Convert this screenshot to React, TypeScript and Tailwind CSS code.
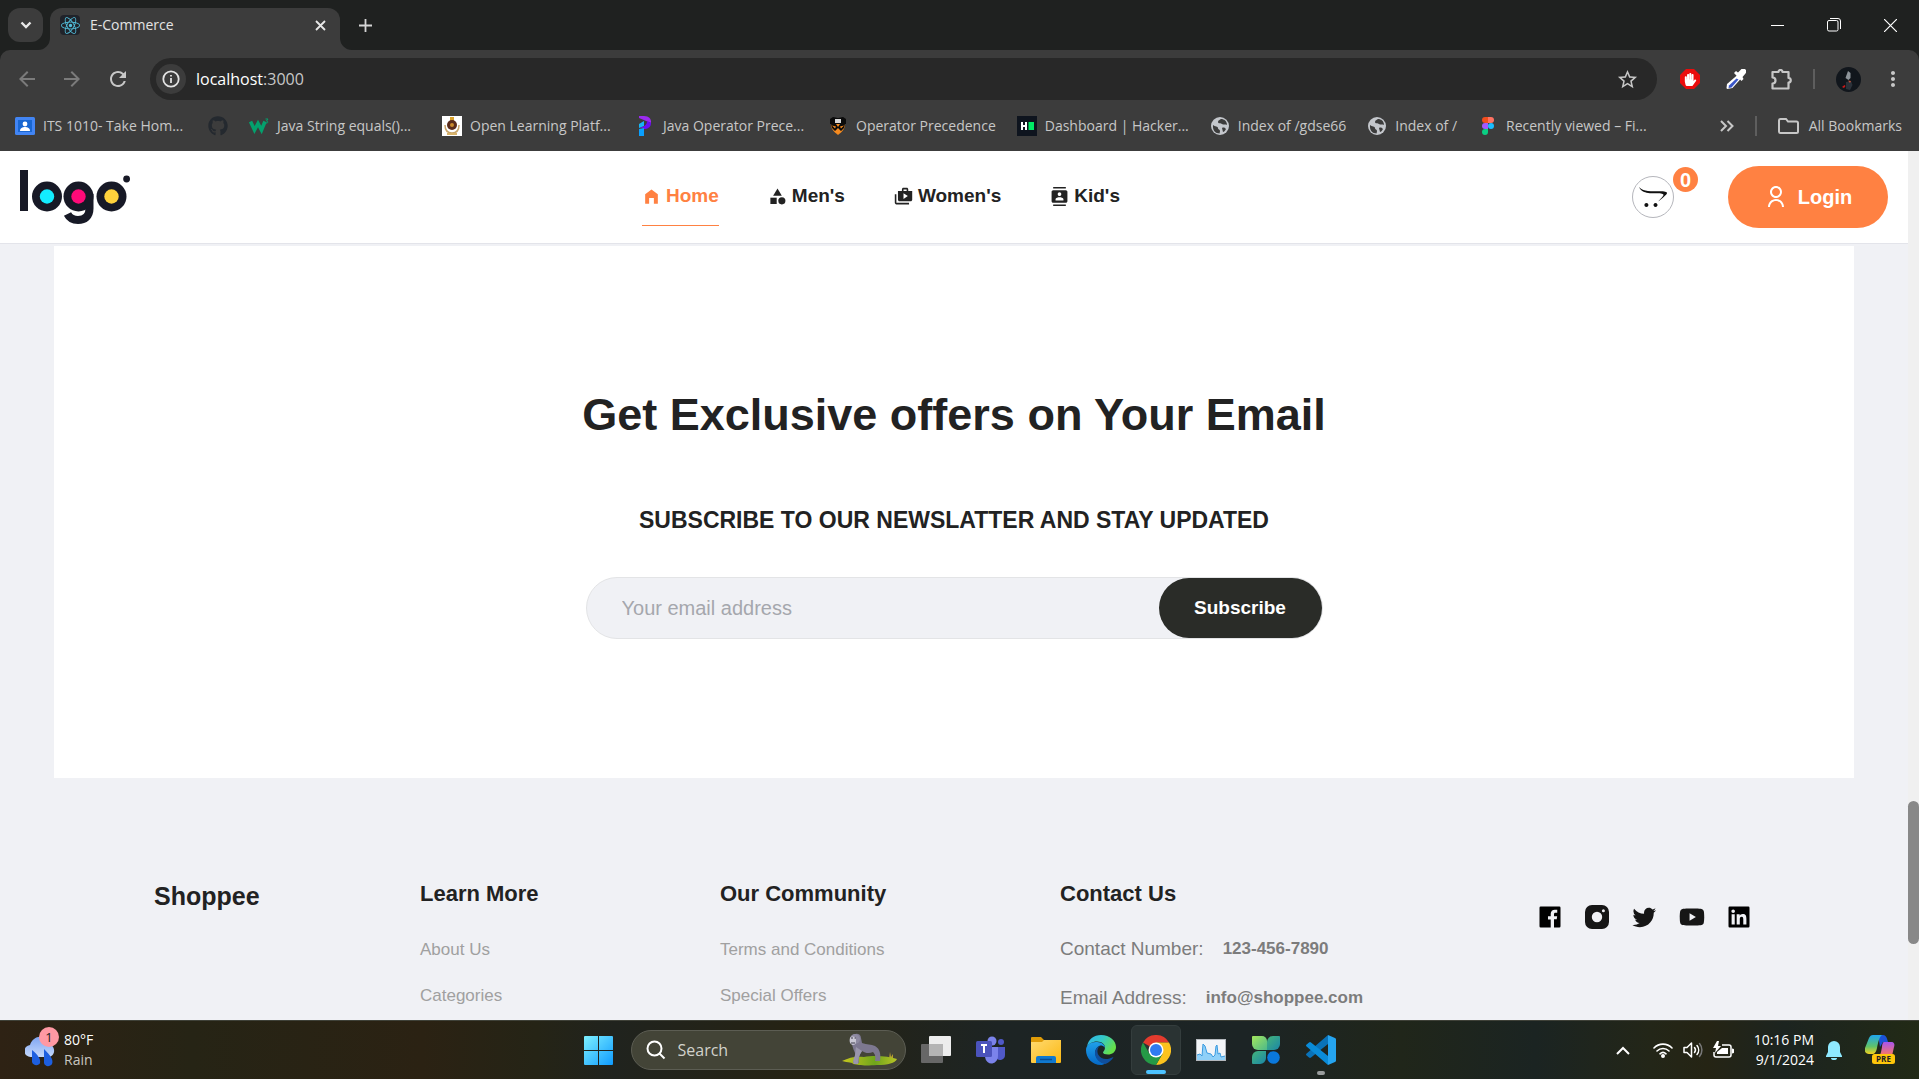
import React from "react";
import { FaGithub, FaReact, FaOpencart, FaHandPaper } from "react-icons/fa";
import {
  MdHomeFilled,
  MdCategory,
  MdShop2,
  MdContacts,
  MdStarBorder,
  MdRefresh,
  MdArrowBack,
  MdArrowForward,
  MdMoreVert,
} from "react-icons/md";
import { AiFillYoutube } from "react-icons/ai";
import { RiUserLine } from "react-icons/ri";
import { BiLogoFacebookSquare, BiLogoLinkedinSquare, BiLogoTwitter } from "react-icons/bi";

/* ---------- Favicons ---------- */

function ClassroomIcon() {
  return (
    <svg width="20" height="20" viewBox="0 0 20 20">
      <rect y="1" width="20" height="18" rx="1.5" fill="#4285f4" />
      <rect x="3" y="4" width="14" height="12" fill="#1967d2" />
      <circle cx="10" cy="8" r="2.4" fill="#fff" />
      <path d="M5 15c0-3 2.5-4 5-4s5 1 5 4z" fill="#fff" />
    </svg>
  );
}

function W3Icon() {
  return (
    <svg width="20" height="20" viewBox="0 0 20 20" fill="none" stroke="#04a06d">
      <path d="M1.500 5.500l4 8.500 3.500-6.500 3.500 6.500 3.500-8.500" strokeWidth="3.600" />
      <path d="M16.500 3h2.500l-1.500 2c2 0 2 2.500-1 2" strokeWidth="1" />
    </svg>
  );
}

function CrestIcon() {
  return (
    <svg width="20" height="20" viewBox="0 0 20 20">
      <rect width="20" height="20" fill="#fff" />
      <rect x="8" y="1" width="4" height="4" fill="#d9a22b" />
      <path d="M3 9c0 6 3 8 7 8s7-2 7-8" fill="none" stroke="#c9a56a" strokeWidth="1.500" />
      <circle cx="10" cy="9" r="5" fill="#5a2b1a" />
      <circle cx="10" cy="9" r="2" fill="#c98a2b" />
      <path d="M5 17h10v2H5z" fill="#d8b36a" />
    </svg>
  );
}

function ProgramizIcon() {
  return (
    <svg width="20" height="20" viewBox="0 0 20 20">
      <path d="M4 0h5c5 0 7.500 3 7 7L4 2z" fill="#9b2bf0" />
      <path d="M12 5l4 2c0 4-3 6-7 6l-4-2c4 0 7-2 7-6z" fill="#6a0df5" />
      <path d="M4 8l5-3v5l-5 2z" fill="#19b3f5" />
      <path d="M4 13l5-1v8H4z" fill="#0aa0ff" />
    </svg>
  );
}

function PrincetonIcon() {
  return (
    <svg width="20" height="20" viewBox="0 0 20 20">
      <path d="M2 3l3-2 5 1 5-1 3 2v5H2z" fill="#0b0b0b" />
      <path d="M7 3h6v4H7z" fill="#d8d8d8" />
      <path d="M3 8h14c0 5-3 8-7 11C6 16 3 13 3 8z" fill="#f58a1f" />
      <path d="M3 8h5l2 3 2-3h5l-1 4-3 3-3-3-3 3-3-3z" fill="#0b0b0b" />
      <path d="M4 9.500l3 3 1-2zM16 9.500l-3 3-1-2z" fill="#f58a1f" />
    </svg>
  );
}

function HackerRankIcon() {
  return (
    <svg width="20" height="20" viewBox="0 0 20 20">
      <rect width="20" height="20" fill="#0e141e" />
      <path d="M4 6h2v3h2V6h2v8H8v-3H6v3H4z" fill="#fff" />
      <rect x="11.500" y="6" width="5.500" height="8" fill="#00ea64" />
    </svg>
  );
}

function GlobeIcon() {
  return (
    <svg width="20" height="20" viewBox="0 0 20 20">
      <circle cx="10" cy="10" r="9" fill="#c4c7cc" />
      <path d="M3 9c2 2 5 1 5 3s2 1 2 3-1 2 0 2.500C5 17.500 2.500 14 3 9zM11 3c-1 1-3 1-3 3s3 1 4 2 4 0 5 1c0-4-3-6-6-6zM12 12c2-1 3 0 4 1-1 2-2 3-3 3z" fill="#3c3c3c" />
    </svg>
  );
}

function FigmaIcon() {
  return (
    <svg width="20" height="20" viewBox="0 0 20 20">
      <path d="M10 1H7a3 3 0 0 0 0 6h3z" fill="#f24e1e" />
      <path d="M10 1h3a3 3 0 0 1 0 6h-3z" fill="#ff7262" />
      <path d="M10 7H7a3 3 0 0 0 0 6h3z" fill="#a259ff" />
      <circle cx="13" cy="10" r="3" fill="#1abcfe" />
      <path d="M10 13H7a3 3 0 1 0 3 3z" fill="#0acf83" />
    </svg>
  );
}

/* ---------- Browser chrome ---------- */

type Bookmark = { label: string; icon: React.ReactNode; clipped?: boolean };

const bookmarks: Bookmark[] = [
  { label: "ITS 1010- Take Hom...", icon: <ClassroomIcon />, clipped: true },
  { label: "", icon: <FaGithub className="size-5 text-[#24292f]" /> },
  { label: "Java String equals()...", icon: <W3Icon />, clipped: true },
  { label: "Open Learning Platf...", icon: <CrestIcon />, clipped: true },
  { label: "Java Operator Prece...", icon: <ProgramizIcon />, clipped: true },
  { label: "Operator Precedence", icon: <PrincetonIcon /> },
  { label: "Dashboard | Hacker...", icon: <HackerRankIcon />, clipped: true },
  { label: "Index of /gdse66", icon: <GlobeIcon /> },
  { label: "Index of /", icon: <GlobeIcon /> },
  { label: "Recently viewed – Fi...", icon: <FigmaIcon />, clipped: true },
];

function TabStrip() {
  return (
    <div className="flex h-[50px] items-end pl-2">
      <button aria-label="Search tabs" className="mb-2 flex h-[34px] w-[35px] items-center justify-center rounded-xl bg-[#3c3c3c]">
        <svg width="12" height="8" viewBox="0 0 12 8" fill="none" stroke="#e8e8e8" strokeWidth="2.400">
          <path d="M1.500 1.500L6 6l4.500-4.500" />
        </svg>
      </button>
      <div className="relative ml-[7px] flex h-[42px] w-[290px] items-center rounded-t-xl bg-[#3c3c3c] pr-3 pb-2 pl-[10px]">
        <svg className="absolute bottom-0 -left-3" width="12" height="12" viewBox="0 0 12 12">
          <path d="M12 0v12H0A12 12 0 0 0 12 0z" fill="#3c3c3c" />
        </svg>
        <svg className="absolute -right-3 bottom-0" width="12" height="12" viewBox="0 0 12 12">
          <path d="M0 0v12h12A12 12 0 0 1 0 0z" fill="#3c3c3c" />
        </svg>
        <span className="flex size-5 items-center justify-center rounded-sm bg-[#20232a]">
          <FaReact className="size-[19px] text-[#53c1de]" />
        </span>
        <span className="ml-[10px] flex-1 text-[#e3e3e3]">E-Commerce</span>
        <button aria-label="Close tab" className="flex size-4 items-center justify-center">
          <svg width="11" height="11" viewBox="0 0 11 11" stroke="#e8e8e8" strokeWidth="1.800">
            <path d="M1 1l9 9M10 1l-9 9" />
          </svg>
        </button>
      </div>
      <button aria-label="New tab" className="mb-[18px] ml-[19px]">
        <svg width="13" height="13" viewBox="0 0 13 13" stroke="#d5d5d5" strokeWidth="1.800">
          <path d="M6.500 0v13M0 6.500h13" />
        </svg>
      </button>
      <div className="ml-auto flex h-full items-center">
        <button aria-label="Minimize" className="flex w-[56px] justify-center">
          <svg width="13" height="13" viewBox="0 0 13 13" stroke="#fff">
            <path d="M0 6.500h13" />
          </svg>
        </button>
        <button aria-label="Restore" className="flex w-[57px] justify-center">
          <svg width="14" height="14" viewBox="0 0 14 14" fill="none" stroke="#fff">
            <rect x="0.500" y="2.500" width="10.500" height="10.500" rx="1.500" />
            <path d="M3 0.500h8a2.500 2.500 0 0 1 2.500 2.500v8" />
          </svg>
        </button>
        <button aria-label="Close" className="flex w-[57px] justify-center">
          <svg width="13" height="13" viewBox="0 0 13 13" stroke="#fff" strokeWidth="1.200">
            <path d="M0 0l13 13M13 0L0 13" />
          </svg>
        </button>
      </div>
    </div>
  );
}

function Toolbar() {
  return (
    <div className="flex h-[58px] items-center pr-[14px] pl-[15px] text-[#c7c7c7]">
      <button aria-label="Back" className="mr-[21px] text-[#7b7b7b]"><MdArrowBack className="size-6" /></button>
      <button aria-label="Forward" className="mr-[22px] text-[#7b7b7b]"><MdArrowForward className="size-6" /></button>
      <button aria-label="Reload" className="mr-[20px]"><MdRefresh className="size-6" /></button>
      <div className="flex h-[42px] flex-1 items-center rounded-full bg-[#282828] pr-[18px] pl-[6px]">
        <button aria-label="View site information" className="flex size-[30px] items-center justify-center rounded-full bg-[#3c3c3c]">
          <svg width="18" height="18" viewBox="0 0 18 18" fill="none" stroke="#e3e3e3" strokeWidth="1.800">
            <circle cx="9" cy="9" r="7.700" />
            <path d="M9 8v5M9 5v1.500" />
          </svg>
        </button>
        <div role="textbox" aria-label="Address" className="ml-[10px] flex-1 text-base text-white">
          localhost<span className="text-[#c7c7c7]">:3000</span>
        </div>
        <button aria-label="Bookmark this tab"><MdStarBorder className="size-[23px]" /></button>
      </div>
      <button aria-label="Ad blocker" className="ml-[23px]">
        <span className="relative flex size-5 items-center justify-center">
          <svg className="absolute inset-0" width="20" height="20" viewBox="0 0 20 20">
            <path d="M6 0h8l6 6v8l-6 6H6l-6-6V6z" fill="#ea0c0c" />
          </svg>
          <FaHandPaper className="relative size-[13px] -scale-x-100 text-white" />
        </span>
      </button>
      <button aria-label="Color picker" className="ml-[25px]">
        <svg width="21" height="21" viewBox="0 0 21 21">
          <path d="M13 5.500l3.500 3.500-9 10L2 20l-.5-1 .5-4z" fill="#fff" />
          <path d="M11.500 9.500l2 1-7 8-3 .5.5-2.500z" fill="#3a56c8" />
          <path d="M9 4l2-2 2 1.500L16 .500a3 3 0 0 1 4.500 4L17.500 8l1 2-2 2z" fill="#fff" />
        </svg>
      </button>
      <button aria-label="Extensions" className="ml-[25px]">
        <svg width="21" height="21" viewBox="0 0 21 21" fill="none" stroke="#c7c7c7" strokeWidth="2.200" strokeLinejoin="round">
          <path d="M1.500 3H7.500a2 2 0 0 1 4 0h6v6a2 2 0 0 1 0 4.500v6h-16v-5a3 3 0 0 0 0-6z" />
        </svg>
      </button>
      <span className="mx-[21px] h-5 w-[2px] bg-[#5e5e5e]" />
      <button aria-label="Profile" className="mr-[20px]">
        <svg width="25" height="25" viewBox="0 0 25 25">
          <circle cx="12.500" cy="12.500" r="12.500" fill="#11161c" />
          <path d="M12 4l2.500 2v5l-2 2-3-2z" fill="#8d949a" />
          <path d="M10 15l5-1 1.500 4-2.500 5-4-1z" fill="#2b323a" />
          <path d="M6 20l2.500-2 1 1-1.500 2z" fill="#d01818" />
          <path d="M12 13.500l3 .5-1 2z" fill="#c4553a" />
        </svg>
      </button>
      <button aria-label="Menu"><MdMoreVert className="size-6" /></button>
    </div>
  );
}

function BookmarksBar() {
  return (
    <div className="flex h-[43px] items-center gap-[21px] pr-[17px] pb-[7px] pl-[15px] text-[#c7c7c7]">
      {bookmarks.map((b, i) => (
        <a
          key={i}
          href="#bookmark"
          aria-label={b.label || "GitHub"}
          className={b.clipped ? "flex w-[172px] shrink-0 items-center gap-2 whitespace-nowrap" : "flex shrink-0 items-center gap-2 whitespace-nowrap"}
        >
          {b.icon}
          {b.label && <span>{b.label}</span>}
        </a>
      ))}
      <button aria-label="More bookmarks" className="ml-auto">
        <svg width="14" height="12" viewBox="0 0 14 12" fill="none" stroke="#c7c7c7" strokeWidth="2">
          <path d="M1 1l5 5-5 5M7.500 1l5 5-5 5" />
        </svg>
      </button>
      <span className="h-5 w-[2px] bg-[#5e5e5e]" />
      <button className="flex items-center gap-[10px]">
        <svg width="21" height="16" viewBox="0 0 21 16" fill="none" stroke="#c7c7c7" strokeWidth="2">
          <path d="M1 2.500A1.500 1.500 0 0 1 2.500 1H8l2 2.500h8.500A1.500 1.500 0 0 1 20 5v8.500a1.500 1.500 0 0 1-1.500 1.500h-16A1.500 1.500 0 0 1 1 13.500z" />
        </svg>
        All Bookmarks
      </button>
    </div>
  );
}

/* ---------- Shop page ---------- */

function Logo() {
  return (
    <svg width="110" height="54" viewBox="0 0 110 54" role="img" aria-label="logo">
      <g fill="#171926">
        <rect width="8" height="41" />
        <circle cx="27" cy="26.500" r="15" />
        <circle cx="58.500" cy="26.500" r="15" />
        <circle cx="91.500" cy="26.500" r="15" />
        <circle cx="106.600" cy="9" r="3.400" />
      </g>
      <path d="M69.500 24v14.500c0 8-5 11.500-11.500 11.500-5 0-8.500-2-10.500-6" fill="none" stroke="#171926" strokeWidth="8" />
      <circle cx="27" cy="26.500" r="7.200" fill="#13ecff" />
      <circle cx="58.500" cy="26.500" r="7.200" fill="#ff0a78" />
      <circle cx="91.500" cy="26.500" r="7.200" fill="#ffd23c" />
    </svg>
  );
}

const navItems = [
  { label: "Home", Icon: MdHomeFilled, active: true },
  { label: "Men's", Icon: MdCategory, active: false },
  { label: "Women's", Icon: MdShop2, active: false },
  { label: "Kid's", Icon: MdContacts, active: false },
];

function Header() {
  return (
    <header className="flex h-[93px] items-center justify-between border-b border-[#e3e4ea] bg-white px-5">
      <Logo />
      <nav className="flex gap-[49px] text-[19px] font-bold">
        {navItems.map(({ label, Icon, active }) => (
          <a
            key={label}
            href="#shop"
            className={
              active
                ? "flex h-[58px] items-center gap-[5px] border-b border-[#ff8142] text-[#ff8142]"
                : "flex h-[58px] items-center gap-[5px] border-b border-transparent"
            }
          >
            <Icon className="size-[19px]" />
            {label}
          </a>
        ))}
      </nav>
      <div className="flex items-center gap-[54px]">
        <button aria-label="Cart" className="relative flex size-[42px] items-center justify-center rounded-full border border-[#b5b6bc] text-[#111]">
          <FaOpencart className="size-7" />
          <span className="absolute -top-[10px] -right-[25px] flex size-[25px] items-center justify-center rounded-full bg-[#ff8142] text-xl font-bold text-white">
            0
          </span>
        </button>
        <button className="flex h-[62px] w-[160px] items-center justify-center gap-[10px] rounded-full bg-[#ff8142] text-xl font-bold text-white">
          <RiUserLine className="size-6" />
          Login
        </button>
      </div>
    </header>
  );
}

function Newsletter() {
  return (
    <section className="mx-[54px] mt-[2px] flex flex-col items-center bg-white py-[139px]">
      <h1 className="text-[45px] leading-[60px] font-bold">Get Exclusive offers on Your Email</h1>
      <p className="mt-[60px] mb-[42px] text-[23px] leading-[30px] font-bold">SUBSCRIBE TO OUR NEWSLATTER AND STAY UPDATED</p>
      <form className="flex h-[62px] w-[737px] rounded-full border border-[#e3e4e6] bg-[#f0f1f5]">
        <input
          type="email"
          aria-label="Your email address"
          placeholder="Your email address"
          className="min-w-0 flex-1 bg-transparent pl-[35px] text-xl outline-none placeholder:text-[#a5a7ad]"
        />
        <button type="button" className="w-[163px] rounded-full bg-[#2a2c28] text-[19px] font-bold text-white">Subscribe</button>
      </form>
    </section>
  );
}

function LinkColumn({ title, links }: { title: string; links: string[] }) {
  return (
    <div>
      <h2 className="text-[22px] leading-8 font-bold">{title}</h2>
      <ul className="mt-7 flex flex-col gap-[22px] text-[17px] leading-6 text-[#a0a0a0]">
        {links.map((l) => (
          <li key={l}><a href="#link">{l}</a></li>
        ))}
      </ul>
    </div>
  );
}

function InstagramIcon() {
  return (
    <svg width="28" height="28" viewBox="0 0 28 28">
      <path
        fillRule="evenodd"
        d="M9 2h10a7 7 0 0 1 7 7v10a7 7 0 0 1-7 7H9a7 7 0 0 1-7-7V9a7 7 0 0 1 7-7zM14 8.800a5.200 5.200 0 1 0 0 10.400 5.200 5.200 0 0 0 0-10.400zM20.400 6.200a1.500 1.500 0 1 0 0 3 1.500 1.500 0 0 0 0-3z"
        fill="#161616"
      />
    </svg>
  );
}

function Footer() {
  return (
    <footer className="mt-[100px] grid grid-cols-[266fr_300fr_340fr_476fr_218fr] px-[154px]">
      <h2 className="pt-[2px] text-[25px] leading-8 font-bold">Shoppee</h2>
      <LinkColumn title="Learn More" links={["About Us", "Categories"]} />
      <LinkColumn title="Our Community" links={["Terms and Conditions", "Special Offers"]} />
      <div>
        <h2 className="text-[22px] leading-8 font-bold">Contact Us</h2>
        <dl className="mt-[27px] flex flex-col gap-[25px] leading-6 text-[#7c7c7c]">
          <div className="flex gap-[19px]">
            <dt className="text-[19px]">Contact Number:</dt>
            <dd className="text-[17px] font-bold">123-456-7890</dd>
          </div>
          <div className="flex gap-[19px]">
            <dt className="text-[19px]">Email Address:</dt>
            <dd className="text-[17px] font-bold">info@shoppee.com</dd>
          </div>
        </dl>
      </div>
      <div className="flex gap-[19px] pt-[25px] text-black">
        <a href="#facebook" aria-label="Facebook"><BiLogoFacebookSquare className="size-7" /></a>
        <a href="#instagram" aria-label="Instagram"><InstagramIcon /></a>
        <a href="#twitter" aria-label="Twitter"><BiLogoTwitter className="size-[29px] text-[#161616]" /></a>
        <a href="#youtube" aria-label="YouTube"><AiFillYoutube className="size-7 text-[#161616]" /></a>
        <a href="#linkedin" aria-label="LinkedIn"><BiLogoLinkedinSquare className="size-7" /></a>
      </div>
    </footer>
  );
}

/* ---------- Taskbar ---------- */

function WindowsLogo() {
  return (
    <svg width="29" height="29" viewBox="0 0 29 29">
      <defs>
        <linearGradient id="win" x1="0" y1="0" x2="1" y2="1">
          <stop offset="0" stopColor="#7df0ff" />
          <stop offset="1" stopColor="#0f9bff" />
        </linearGradient>
      </defs>
      <path fill="url(#win)" d="M1 0h13v14H0V1a1 1 0 0 1 1-1zM15 0h13a1 1 0 0 1 1 1v13H15zM0 15h14v14H1a1 1 0 0 1-1-1zM15 15h14v13a1 1 0 0 1-1 1H15z" />
    </svg>
  );
}

function Gorilla() {
  return (
    <svg width="56" height="34" viewBox="0 0 56 34">
      <defs>
        <linearGradient id="grass" x1="0" y1="0" x2="1" y2="0">
          <stop offset="0" stopColor="#c8c81e" />
          <stop offset="0.6" stopColor="#6fa51c" />
          <stop offset="1" stopColor="#b9c425" />
        </linearGradient>
      </defs>
      <path d="M47 26l1-7 1 5 2-3v5z" fill="#b9a22e" />
      <path d="M0 28c8-4 14-5 22-4 10-2 24-1 33 2-2 4-9 6-20 6-14 1-18 0-24-1 0-2-5-1-11-3z" fill="url(#grass)" />
      <path d="M10 4c2-5 9-4 9 1l1 5c5 2 9 1 13 3 5 3 6 8 5 15h-5c1-4 0-7-2-9-4 2-8 1-11-1-2 3-4 7-3 12h-6c0-3 3-6 2-10-3-6-4-12-3-16z" fill="#7d7890" />
      <path d="M14 14c-1 4 0 7-2 11-1 2-1 4 0 6h4c0-5 1-9 4-13z" fill="#9a96ac" />
      <circle cx="13" cy="6" r="5" fill="#8d89a0" />
      <path d="M8 5c1-2 6-2 6 1s0 6-3 6-4-4-3-7z" fill="#c9c7d4" />
      <path d="M9 5h2M12.500 5h1.500M9 10h4" stroke="#3d3a4a" strokeWidth="1" />
    </svg>
  );
}

function TaskViewIcon() {
  return (
    <svg width="30" height="30" viewBox="0 0 30 30">
      <rect x="8" y="1" width="22" height="20" rx="1" fill="#ededed" />
      <rect x="0" y="9" width="22" height="19" rx="1" fill="#676767" />
      <rect x="8" y="9" width="14" height="12" fill="#b4b4b4" />
    </svg>
  );
}

function TeamsIcon() {
  return (
    <svg width="30" height="30" viewBox="0 0 30 30">
      <circle cx="25" cy="7" r="3" fill="#5059c9" />
      <path d="M20 12h9v8a5 5 0 0 1-9 3z" fill="#5059c9" />
      <circle cx="16" cy="6" r="4.500" fill="#7b83eb" />
      <path d="M9 12h13v8a6.500 7.500 0 0 1-13 2z" fill="#7b83eb" />
      <rect x="0" y="6" width="16" height="16" rx="1.500" fill="#4b53bc" />
      <path d="M5 10h6M8 10v8" stroke="#fff" strokeWidth="2" />
    </svg>
  );
}

function FolderIcon() {
  return (
    <svg width="30" height="30" viewBox="0 0 30 30">
      <defs>
        <linearGradient id="folder" x1="0" y1="0" x2="1" y2="1">
          <stop offset="0" stopColor="#ffda70" />
          <stop offset="1" stopColor="#fbb812" />
        </linearGradient>
      </defs>
      <path d="M0 3a1 1 0 0 1 1-1h9l3 3h16a1 1 0 0 1 1 1v4H0z" fill="#e09c08" />
      <path d="M0 7h11l2-2h17v22a1 1 0 0 1-1 1H1a1 1 0 0 1-1-1z" fill="url(#folder)" />
      <path d="M5 28v-5a2 2 0 0 1 2-2h16a2 2 0 0 1 2 2v5z" fill="#1079cf" />
      <path d="M9 24.500h12" stroke="#0a4c92" strokeWidth="1.500" />
    </svg>
  );
}

function EdgeIcon() {
  return (
    <svg width="30" height="30" viewBox="0 0 30 30">
      <defs>
        <linearGradient id="edgeTop" x1="0" y1="0" x2="1" y2="0.500">
          <stop offset="0" stopColor="#2fb4ec" />
          <stop offset="0.500" stopColor="#34c8c8" />
          <stop offset="1" stopColor="#66e04a" />
        </linearGradient>
        <linearGradient id="edgeSide" x1="0" y1="0" x2="0" y2="1">
          <stop offset="0" stopColor="#1fa0ea" />
          <stop offset="1" stopColor="#0568c6" />
        </linearGradient>
      </defs>
      <path d="M1 12C2 4 8 0 15 0c9 0 15 6 15 12 0 5-4 7.500-8 7.500-3 0-5-1-5-2s2-2 2-5c0-3-3-6-8-6C6 6.500 2 9 1 12z" fill="url(#edgeTop)" />
      <path d="M0 15C0 10 5 6.500 11 7c5 0 8 3 8 6-1-2-3-2.500-4.500-2.500-4 1-6 5-5 9 1 5 5 8 10 9C17 30 16 30 15 30 6 30 0 23 0 15z" fill="url(#edgeSide)" />
      <path d="M14.500 10.500c-3 2-4 6-2 9.500 3 5 9 5 15 2-1.500 3-4.500 5.500-8 7-6-1-10-5-10.500-10-.3-4 2-7.500 5.500-8.500z" fill="#0f4f9e" />
    </svg>
  );
}

function ChromeIcon() {
  return (
    <svg width="30" height="30" viewBox="0 0 30 30">
      <path d="M15 15L2 7.500A15 15 0 0 1 28 7.500H15z" fill="#e33b2e" />
      <path d="M15 15V7.500h13A15 15 0 0 1 15 30l6.500-11.300z" fill="#fcc31e" />
      <path d="M15 15l6.500 3.700L15 30A15 15 0 0 1 2 7.500l6.500 11.200z" fill="#259a46" />
      <circle cx="15" cy="15" r="7.500" fill="#fff" />
      <circle cx="15" cy="15" r="6" fill="#2f7bf0" />
    </svg>
  );
}

function MonitorIcon() {
  return (
    <svg width="30" height="30" viewBox="0 0 30 30">
      <rect x="0.500" y="4.500" width="29" height="21" fill="#f3f5f8" stroke="#b4b8bd" />
      <path d="M1 20l3-1 2 2 1-12 2 2 2 7 4 1 2 3 2-2 1-9 1-1 1 9 2-1 1 4 4-1v4H1z" fill="#8fd0f8" />
      <path d="M1 20l3-1 2 2 1-12 2 2 2 7 4 1 2 3 2-2 1-9 1-1 1 9 2-1 1 4 4-1" fill="none" stroke="#3b9be0" />
    </svg>
  );
}

function CloverIcon() {
  return (
    <svg width="30" height="30" viewBox="0 0 30 30">
      <defs>
        <linearGradient id="cloverA" x1="0" y1="0" x2="1" y2="1">
          <stop offset="0" stopColor="#a4e65c" />
          <stop offset="1" stopColor="#4db98a" />
        </linearGradient>
        <linearGradient id="cloverB" x1="0" y1="0" x2="1" y2="1">
          <stop offset="0" stopColor="#44b47a" />
          <stop offset="1" stopColor="#1b86a8" />
        </linearGradient>
      </defs>
      <path d="M2 1h9a5 5 0 0 1 5 5v9H7a6 6 0 0 1-6-6V2a1 1 0 0 1 1-1z" fill="url(#cloverA)" />
      <path d="M28 1h-6a6 6 0 0 0-6 6v8h7a6 6 0 0 0 6-6V2a1 1 0 0 0-1-1z" fill="url(#cloverB)" />
      <path d="M1 28v-6a6 6 0 0 1 6-6h8v7a6 6 0 0 1-6 6H2a1 1 0 0 1-1-1z" fill="url(#cloverB)" />
      <circle cx="22.500" cy="22.500" r="6.300" fill="#0a78dc" />
    </svg>
  );
}

function CodeIcon() {
  return (
    <svg width="30" height="30" viewBox="0 0 30 30">
      <path d="M22 0v9L5 22.500a1.500 1.500 0 0 1-2 0L.600 20.500a1.300 1.300 0 0 1 0-2z" fill="#0a72b8" />
      <path d="M22 30v-9L5 7.500a1.500 1.500 0 0 0-2 0L.600 9.500a1.300 1.300 0 0 0 0 2z" fill="#0a8bd8" />
      <path d="M22 0l7 3a2 2 0 0 1 1 2v20a2 2 0 0 1-1 2l-7 3z" fill="#25a4f0" />
    </svg>
  );
}

function WeatherIcon() {
  return (
    <svg width="30" height="34" viewBox="0 0 30 34">
      <defs>
        <linearGradient id="cloud" x1="0" y1="0" x2="0" y2="1">
          <stop offset="0" stopColor="#7fa5f2" />
          <stop offset="1" stopColor="#c4d8fb" />
        </linearGradient>
      </defs>
      <path d="M6 24a6 6 0 0 1-1-12C7 6 12 3 17 4c6 0 9 4 9 8 5 3 4 12-3 12z" fill="url(#cloud)" />
      <path d="M7 17c6 5 9 9 8 13-1 3-7 3-8-1zM19 16c6 6 10 11 8 15-2 3-7 3-8-1z" fill="#1d5fe0" />
    </svg>
  );
}

function CopilotIcon() {
  return (
    <svg width="31" height="30" viewBox="0 0 31 30">
      <defs>
        <linearGradient id="copilotA" x1="0" y1="0" x2="0" y2="1">
          <stop offset="0" stopColor="#1fa7f0" />
          <stop offset="0.600" stopColor="#5fc36a" />
          <stop offset="1" stopColor="#f2d21f" />
        </linearGradient>
        <linearGradient id="copilotB" x1="0" y1="0" x2="0" y2="1">
          <stop offset="0" stopColor="#a854f0" />
          <stop offset="1" stopColor="#ff7a5a" />
        </linearGradient>
      </defs>
      <path d="M13 0h5c3 0 4 3 5 7h-5l-3 5z" fill="#1b52d8" />
      <path d="M8 0h9c-3 2-4 8-5 13-1 4-2 6-5 6H4c-3 0-5-2-4-6L4 3c1-2 2-3 4-3z" fill="url(#copilotA)" />
      <path d="M19 7h7c3 0 4 2 3 5l-2 9H14c2-2 2-4 3-9 0-3 1-5 2-5z" fill="url(#copilotB)" />
      <rect x="7" y="19" width="23" height="10" rx="2.500" fill="#ffc60a" />
      <text x="18.500" y="27" textAnchor="middle" fontSize="8" fontWeight="700" fill="#222">PRE</text>
    </svg>
  );
}

const apps = [
  { name: "Task View", icon: <TaskViewIcon /> },
  { name: "Teams", icon: <TeamsIcon /> },
  { name: "File Explorer", icon: <FolderIcon /> },
  { name: "Edge", icon: <EdgeIcon /> },
  { name: "Chrome", icon: <ChromeIcon />, state: "active" },
  { name: "Resource Monitor", icon: <MonitorIcon /> },
  { name: "Clover", icon: <CloverIcon /> },
  { name: "Code", icon: <CodeIcon />, state: "running" },
];

function Taskbar() {
  return (
    <div className="grid h-[59px] shrink-0 grid-cols-[1fr_auto_1fr] items-center border-t border-[#3f4138] bg-[linear-gradient(90deg,#2e2214_0%,#262415_10%,#2b2213_22%,#252416_28%,#20231e_32%,#262313_42%,#1d2424_52%,#1c2425_65%,#20261a_73%,#1b2422_80%,#232618_86%,#252414_89%,#1c2420_93%,#222a16_100%)] font-['Open_Sans','Noto_Sans',sans-serif] text-sm leading-5 text-white">
      <button className="relative ml-[25px] flex items-center gap-[9px] justify-self-start text-left">
        <WeatherIcon />
        <span>
          80°F
          <span className="block text-[#c9c6c0]">Rain</span>
        </span>
        <span className="absolute -top-[3px] left-[14px] flex size-5 items-center justify-center rounded-full bg-[#ff99a4] text-[13px] text-[#222]">1</span>
      </button>
      <div className="flex items-center gap-[5px]">
        <button aria-label="Start" className="flex size-[50px] items-center justify-center"><WindowsLogo /></button>
        <label className="ml-[2px] flex h-10 w-[275px] items-center rounded-full border border-[#5c5d53] bg-[#434437] pl-[14px]">
          <svg width="20" height="20" viewBox="0 0 20 20" fill="none" stroke="#fff" strokeWidth="2">
            <circle cx="8.500" cy="8.500" r="7" />
            <path d="M13.500 13.500l5 5" />
          </svg>
          <input type="search" aria-label="Search" placeholder="Search" className="ml-3 w-[164px] bg-transparent text-base outline-none placeholder:text-[#d2d2cc]" />
          <Gorilla />
        </label>
        {apps.map((a) => (
          <button
            key={a.name}
            aria-label={a.name}
            className={
              a.state === "active"
                ? "relative flex size-[50px] items-center justify-center rounded-md border border-[#343d3d] bg-[#2a3333]"
                : "relative flex size-[50px] items-center justify-center"
            }
          >
            {a.icon}
            {a.state === "active" && <span className="absolute bottom-0 h-1 w-5 rounded-full bg-[#4cc2ff]" />}
            {a.state === "running" && <span className="absolute bottom-0 h-1 w-2 rounded-full bg-[#9a9d9d]" />}
          </button>
        ))}
      </div>
      <div className="mr-[23px] flex items-center justify-self-end">
        <button aria-label="Show hidden icons" className="mr-[23px]">
          <svg width="14" height="9" viewBox="0 0 14 9" fill="none" stroke="#fff" strokeWidth="2">
            <path d="M1 8l6-6 6 6" />
          </svg>
        </button>
        <button aria-label="Network, volume and battery" className="flex items-center gap-[10px]">
          <svg width="20" height="16" viewBox="0 0 20 16" fill="none" stroke="#fff" strokeWidth="1.600" strokeLinecap="round">
            <path d="M1 6a12.500 12.500 0 0 1 18 0M4 9a8.500 8.500 0 0 1 12 0M7 11.800a4.500 4.500 0 0 1 6 0" />
            <circle cx="10" cy="14" r="1.200" fill="#fff" />
          </svg>
          <svg width="20" height="18" viewBox="0 0 20 18" fill="none" stroke="#fff" strokeWidth="1.500" strokeLinecap="round" strokeLinejoin="round">
            <path d="M1 6.500h3l4.500-4.500v14L4 11.500H1z" />
            <path d="M11.500 6.500a4 4 0 0 1 0 5M14 4.500a7 7 0 0 1 0 9" />
            <path d="M16.500 2.500a10 10 0 0 1 0 13" stroke="#777" />
          </svg>
          <svg width="21" height="18" viewBox="0 0 21 18">
            <path d="M9 4h7a2 2 0 0 1 2 2v8a2 2 0 0 1-2 2H3a2 2 0 0 1-2-2v-3" fill="none" stroke="#fff" strokeWidth="1.500" />
            <path d="M9 7h6v6H4v-2zM19 7.500a2 2 0 0 1 0 5zM4 0L0 7h3l-1 5 6-7H5l1-5z" fill="#fff" />
          </svg>
        </button>
        <button className="ml-5 text-right">
          10:16 PM
          <span className="block">9/1/2024</span>
        </button>
        <button aria-label="Notifications" className="ml-[12px]">
          <svg width="16" height="19" viewBox="0 0 16 19" fill="#8fe9ff">
            <path d="M8 0a6 6 0 0 1 6 6v5l2 4v1H0v-1l2-4V6a6 6 0 0 1 6-6zM5 17h6a3 2 0 0 1-6 0z" />
          </svg>
        </button>
        <button aria-label="Copilot" className="ml-[23px]"><CopilotIcon /></button>
      </div>
    </div>
  );
}

export default function App() {
  return (
    <div className="flex h-screen flex-col overflow-hidden">
      <div className="shrink-0 bg-[#1f2120] font-['Open_Sans','Noto_Sans',sans-serif] text-sm">
        <TabStrip />
        <div className="rounded-t-[10px] bg-[#3c3c3c]">
          <Toolbar />
          <BookmarksBar />
        </div>
      </div>
      <div className="flex min-h-0 flex-1 font-['Liberation_Sans',Arial,sans-serif] text-[#222]">
        <main className="flex-1 overflow-hidden bg-[#f0f1f5]">
          <Header />
          <Newsletter />
          <Footer />
        </main>
        <div className="flex w-[11px] flex-col bg-[#f0f0f0]">
          <span className="flex-[650]" />
          <span className="h-[143px] rounded-full bg-[#888]" />
          <span className="flex-[76]" />
        </div>
      </div>
      <Taskbar />
    </div>
  );
}
